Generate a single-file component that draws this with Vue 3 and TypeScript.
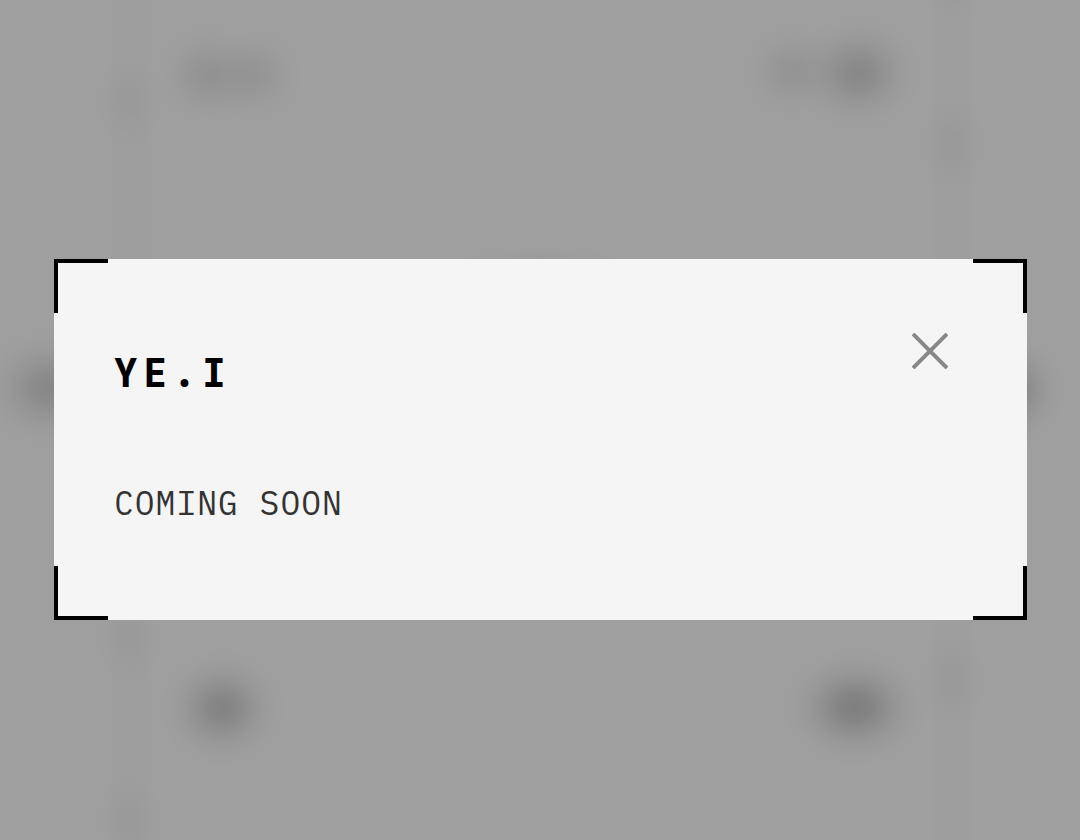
<script setup lang="ts">
import { ref } from 'vue'

interface Spot {
  cx: number
  cy: number
  rx: number
  ry: number
  strength: number
}

const open = ref(true)

const spots: Spot[] = [
  { cx: 129, cy: 102, rx: 44, ry: 60, strength: 0.03 },
  { cx: 208, cy: 75, rx: 60, ry: 58, strength: 0.08 },
  { cx: 254, cy: 75, rx: 56, ry: 56, strength: 0.065 },
  { cx: 792, cy: 71, rx: 58, ry: 56, strength: 0.07 },
  { cx: 858, cy: 73, rx: 68, ry: 62, strength: 0.145 },
  { cx: 952, cy: 145, rx: 44, ry: 60, strength: 0.03 },
  { cx: 952, cy: -10, rx: 36, ry: 38, strength: 0.02 },
  { cx: 540, cy: 276, rx: 120, ry: 38, strength: 0.06 },
  { cx: 50, cy: 388, rx: 76, ry: 64, strength: 0.15 },
  { cx: 1016, cy: 390, rx: 52, ry: 60, strength: 0.15 },
  { cx: 129, cy: 638, rx: 44, ry: 60, strength: 0.03 },
  { cx: 222, cy: 708, rx: 66, ry: 62, strength: 0.175 },
  { cx: 855, cy: 707, rx: 76, ry: 62, strength: 0.205 },
  { cx: 952, cy: 680, rx: 44, ry: 60, strength: 0.03 },
  { cx: 129, cy: 820, rx: 44, ry: 60, strength: 0.03 },
]
</script>

<template>
  <main class="page">
    <svg class="backdrop" viewBox="0 0 1080 840" preserveAspectRatio="none" aria-hidden="true">
      <defs>
        <radialGradient id="soft-spot">
          <stop offset="0" stop-color="#000" stop-opacity="1" />
          <stop offset="0.2" stop-color="#000" stop-opacity="0.84" />
          <stop offset="0.4" stop-color="#000" stop-opacity="0.5" />
          <stop offset="0.6" stop-color="#000" stop-opacity="0.21" />
          <stop offset="0.8" stop-color="#000" stop-opacity="0.06" />
          <stop offset="1" stop-color="#000" stop-opacity="0" />
        </radialGradient>
      </defs>
      <rect class="rail" x="111" y="0" width="40" height="840" />
      <rect class="rail" x="932" y="0" width="40" height="840" />
      <ellipse
        v-for="(spot, index) in spots"
        :key="index"
        :cx="spot.cx"
        :cy="spot.cy"
        :rx="spot.rx"
        :ry="spot.ry"
        :opacity="spot.strength"
        fill="url(#soft-spot)"
      />
    </svg>

    <section v-if="open" class="dialog" role="dialog" aria-modal="true" aria-labelledby="dialog-title">
      <span class="corner top left"></span>
      <span class="corner top right"></span>
      <span class="corner bottom left"></span>
      <span class="corner bottom right"></span>
      <header class="head">
        <h1 id="dialog-title" class="title">YE.I</h1>
        <button class="close" type="button" aria-label="Close" @click="open = false">
          <svg class="cross" viewBox="0 0 36 36" aria-hidden="true">
            <path d="M1 1L35 35M35 1L1 35" />
          </svg>
        </button>
      </header>
      <p class="message">COMING SOON</p>
    </section>
  </main>
</template>

<style>
body {
  margin: 0;
  background: #9f9f9f;
}
</style>

<style scoped>
.page {
  position: relative;
  box-sizing: border-box;
  display: flex;
  align-items: center;
  justify-content: center;
  min-height: 100vh;
  padding: 39px 53px 0 54px;
  overflow: hidden;
  background: #9f9f9f;
}

.backdrop {
  position: absolute;
  inset: 0;
  width: 100%;
  height: 100%;
}

.rail {
  fill: #9e9e9e;
}

.dialog {
  position: relative;
  box-sizing: border-box;
  width: 100%;
  padding: 54px 60px 87px;
  background: #f5f5f5;
}

.corner {
  position: absolute;
  box-sizing: border-box;
  width: 54px;
  height: 54px;
  border: 0 solid #000;
}

.top {
  top: 0;
  border-top-width: 4px;
}

.bottom {
  bottom: 0;
  border-bottom-width: 4px;
}

.left {
  left: 0;
  border-left-width: 4px;
}

.right {
  right: 0;
  border-right-width: 4px;
}

.head {
  display: flex;
  align-items: flex-start;
  justify-content: space-between;
}

.title {
  margin: 36px 0 0;
  color: #000;
  font-family: "JetBrains Mono", "DejaVu Sans Mono", monospace;
  font-size: 39px;
  font-weight: 800;
  line-height: 48px;
  letter-spacing: 6px;
}

.close {
  display: flex;
  align-items: center;
  justify-content: center;
  width: 75px;
  height: 75px;
  padding: 0;
  border: 0;
  background: transparent;
  cursor: pointer;
}

.cross {
  width: 36px;
  height: 36px;
  fill: none;
  stroke: #888;
  stroke-width: 4;
}

.message {
  margin: 76px 0 0;
  color: #333;
  font-family: "IBM Plex Mono", "Liberation Mono", monospace;
  font-size: 33px;
  font-weight: 400;
  line-height: 60px;
  letter-spacing: 1px;
}
</style>
